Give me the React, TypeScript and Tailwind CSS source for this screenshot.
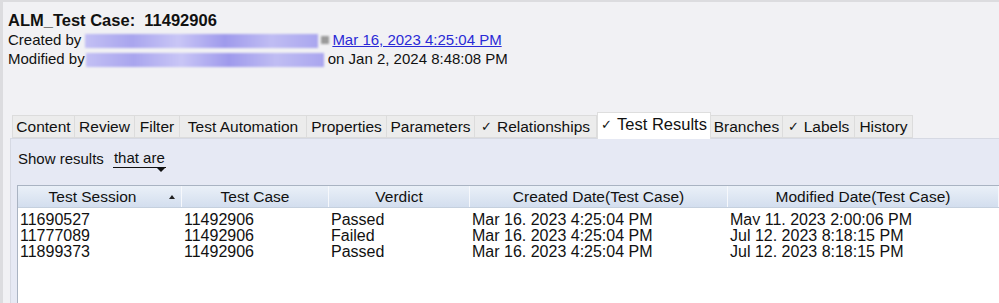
import React from 'react';

const tabs: { label: string; w: string; check?: boolean; active?: boolean }[] = [
  { label: 'Content', w: 'w-[63px]' },
  { label: 'Review', w: 'w-[60px]' },
  { label: 'Filter', w: 'w-[45px]' },
  { label: 'Test Automation', w: 'w-[127px]' },
  { label: 'Properties', w: 'w-[80px]' },
  { label: 'Parameters', w: 'w-[88px]' },
  { label: 'Relationships', w: 'w-[122px]', check: true },
  { label: 'Test Results', w: 'w-[114px]', check: true, active: true },
  { label: 'Branches', w: 'w-[72px]' },
  { label: 'Labels', w: 'w-[72px]', check: true },
  { label: 'History', w: 'w-[58px]' },
];

const rows = [
  ['11690527', '11492906', 'Passed', 'Mar 16, 2023 4:25:04 PM', 'May 11, 2023 2:00:06 PM'],
  ['11777089', '11492906', 'Failed', 'Mar 16, 2023 4:25:04 PM', 'Jul 12, 2023 8:18:15 PM'],
  ['11899373', '11492906', 'Passed', 'Mar 16, 2023 4:25:04 PM', 'Jul 12, 2023 8:18:15 PM'],
];

const cols = ['w-[164px]', 'w-[147px]', 'w-[141px]', 'w-[258px]', 'flex-1'];

const Blur: React.FC<{ w: string }> = ({ w }) => (
  <span
    className={`inline-block h-[14px] ${w} align-middle bg-[linear-gradient(90deg,#c3c0f4,#a9a5ee_20%,#c9c6f6_40%,#9f9aec_60%,#c0bdf3_80%,#aaa6ef)] blur-[1px]`}
  />
);

export default function App() {
  return (
    <div
      className="w-[999px] h-[303px] overflow-hidden bg-[#f1f1f4] border-t-2 border-l-[3px] border-[#dcdcdf] flex flex-col text-[15px] text-[#111] leading-[19px]"
      style={{ fontFamily: '"Liberation Sans", Arial, sans-serif' }}
    >
      <div className="pl-[5px] pt-[9px]">
        <div className="font-bold text-[16.5px]">ALM_Test Case:&nbsp; 11492906</div>
        <div className="flex items-center">
          <span>Created by</span>
          <span className="ml-[4px]"><Blur w="w-[233px]" /></span>
          <span className="ml-[3px] inline-block w-[8px] h-[8px] bg-[#9a9a9a] blur-[1px]" />
          <a href="#" className="ml-[3px] text-[#2a2ad6] underline">Mar 16, 2023 4:25:04 PM</a>
        </div>
        <div className="flex items-center">
          <span>Modified by</span>
          <span className="ml-[1px]"><Blur w="w-[238px]" /></span>
          <span className="ml-[4px]">on Jan 2, 2024 8:48:08 PM</span>
        </div>
      </div>

      <div className="mt-[44px] ml-[9px] flex items-end h-[26px]">
        {tabs.map((t) =>
          t.active ? (
            <div
              key={t.label}
              className={`${t.w} h-[27px] -mb-[1px] bg-white border border-b-0 border-[#dedede] flex items-center justify-center pb-[4px] relative z-10`}
            >
              <span className="text-[13px] mr-[5px]">✓</span>
              <span className="text-[16.5px]">{t.label}</span>
            </div>
          ) : (
            <div
              key={t.label}
              className={`${t.w} h-[23px] bg-[#ececec] border border-l-0 first:border-l border-[#dcdcdc] flex items-center justify-center text-[15.5px]`}
            >
              {t.check && <span className="text-[13px] mr-[5px]">✓</span>}
              <span>{t.label}</span>
            </div>
          )
        )}
      </div>

      <div className="ml-[7px] flex-1 bg-[#e6e9f4] border-l border-t border-[#d6d9e3] flex flex-col">
        <div className="h-[46px] pl-[7px] pt-[10px] flex items-start">
          <span>Show results</span>
          <span className="ml-[9px] relative border-b border-[#111] leading-[18px] px-[1px]">
            that are
            <span className="absolute right-[1px] -bottom-[5px] w-0 h-0 border-x-[4px] border-x-transparent border-t-[4px] border-t-[#111]" />
          </span>
        </div>

        <div className="ml-[6px] flex-1 bg-white border-l border-t border-[#a9b3c2] flex flex-col">
          <div className="h-[22px] flex bg-[linear-gradient(#eaf0f8,#d3deee)] border-b border-[#c5d0de] text-[15.5px]">
            {['Test Session', 'Test Case', 'Verdict', 'Created Date(Test Case)', 'Modified Date(Test Case)'].map((h, i) => (
              <div
                key={h}
                className={`${cols[i]} relative flex items-center justify-center border-r border-[#f6f8fc] ${i === 0 ? 'pr-[14px]' : ''}`}
              >
                {h}
                {i === 0 && (
                  <span className="absolute right-[6px] top-[9px] w-0 h-0 border-x-[3px] border-x-transparent border-b-[4px] border-b-[#222]" />
                )}
              </div>
            ))}
          </div>
          <div className="pt-[1px] text-[16px]">
            {rows.map((r) => (
              <div key={r[0]} className="h-[16px] overflow-hidden flex leading-[21px]">
                {r.map((c, i) => (
                  <div key={i} className={`${cols[i]} pl-[2px] whitespace-nowrap`}>
                    {c}
                  </div>
                ))}
              </div>
            ))}
          </div>
        </div>
      </div>
    </div>
  );
}
